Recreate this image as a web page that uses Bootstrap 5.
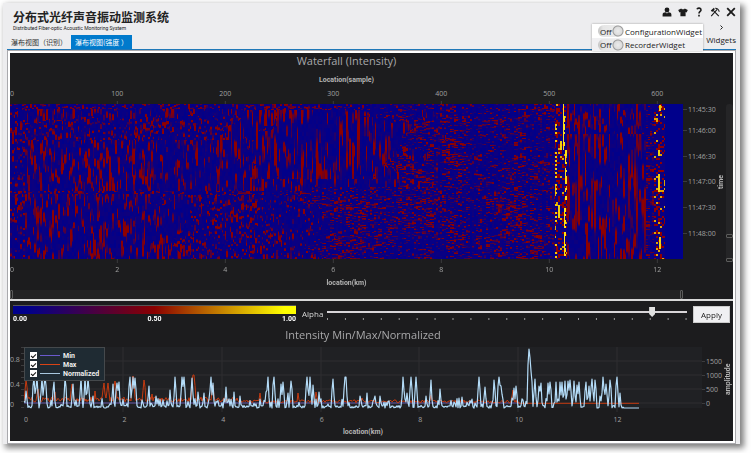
<!DOCTYPE html>
<html lang="zh-CN">
<head>
<meta charset="utf-8">
<meta name="viewport" content="width=device-width, initial-scale=1">
<title>分布式光纤声音振动监测系统</title>
<link href="https://cdn.jsdelivr.net/npm/bootstrap@5.3.0/dist/css/bootstrap.min.css" rel="stylesheet">
<style>
  body { background: #fff; font-family: "Open Sans", "Noto Sans CJK SC", sans-serif; font-size: 7px; line-height: 10px; color: #222; }
  .app-window { margin: 3px 11px 10px 3px; background: #ededef; box-shadow: 3px 3px 6px 1px rgba(0,0,0,.5); }
  .app-header { height: 47px; margin: 0 4px; border-bottom: 1px solid #1f78b8; }
  .app-title { font-family: "Noto Sans CJK SC", sans-serif; font-size: 12px; font-weight: 700; line-height: 16px; margin: 6px 0 0 6px; }
  .app-sub { font-family: Roboto, sans-serif; font-size: 5px; line-height: 6px; margin: 0 0 0 6px; }
  .view-tab { font-family: "Noto Sans CJK SC", sans-serif; font-size: 7px; line-height: 14px; padding: 0 4px; color: #333; text-decoration: none; }
  .view-tab.active { background: #007acc; color: #fff; }
  .icon-row { gap: 6px; }
  .tool-btn { border: 0; background: none; padding: 0; width: 10px; height: 10px; color: #1b1b1b; display: flex; }
  .widgets-btn { border: 0; background: none; padding: 0; font-size: 8px; line-height: 11px; color: #222; }
  .widget-menu { top: 21px; right: 37px; width: 111px; background: #f0f0f2; box-shadow: 0 0 2px rgba(0,0,0,.35); z-index: 3; }
  .widget-menu label { font-size: 8px; line-height: 13px; height: 13px; padding-left: 6px; gap: 1px; color: #222; }
  .widget-menu label:first-child { background: #fff; height: 14px; }
  .switch-box { display: grid; width: 26px; align-items: center; }
  .switch-box > * { grid-area: 1 / 1; }
  .switch-box input { appearance: none; margin: 0; width: 26px; height: 12px; border-radius: 6px; background: radial-gradient(circle at 20px 50%, #ececec 0, #dcdcdc 4px, #9a9a9a 5px, transparent 6px), linear-gradient(90deg, #c4c4c4, #e6e6e6 5px, #efefef); }
  .switch-box span { padding-left: 2px; z-index: 1; pointer-events: none; }
  .frame { margin: 0 4px; padding: 2px; background: #fff; border: 1px solid #a9a9ad; }
  .pane { background: #1c1c1e; color: #a6a6a6; }
  .pane svg { display: block; }
  .pane svg text { fill: #a0a0a0; font-size: 7px; }
  .plot-title { font-size: 11px; line-height: 16px; font-weight: 400; margin: 0; text-align: center; color: #a8a8aa; }
  .axis-title { font-family: Roboto, sans-serif; font-size: 7px; line-height: 10px; font-weight: 700; text-align: center; color: #b4b4b4; }
  .fall-grid { display: grid; grid-template-columns: minmax(0, 1fr) 50px; }
  .pt-title { height: 22px; }
  #heat { display: block; width: 100%; height: 155px; }
  .v-title { font-family: Roboto, sans-serif; writing-mode: vertical-rl; transform: rotate(180deg); font-weight: 700; font-size: 7px; line-height: 10px; text-align: center; color: #b4b4b4; }
  .v-strip { width: 7px; height: 158px; background: #252527; border-radius: 3px; margin-bottom: -3px; gap: 20px; }
  .grip { border: 1px solid #5c5c5c; border-radius: 1px; background: #222; }
  .v-strip .grip { height: 4px; }
  .h-strip { height: 9px; background: #232324; }
  .h-strip .grip { width: 3px; }
  .h-row { margin-top: 2px; }
  .split { height: 2px; background: #d8d8d8; }
  .control-row { padding: 4px 3px 0 3px; }
  .ramp { height: 9px; background: linear-gradient(90deg, #00008b 5%, #8b0000 50%, #ffff00 96%); border-top: 1px solid #555; }
  .ramp-box { flex: 0 0 283px; }
  .ramp-marks { font-family: Roboto, sans-serif; font-size: 7px; font-weight: 700; line-height: 11px; color: #fff; }
  .alpha-label { font-size: 8px; line-height: 12px; color: #d8d8d8; width: 31px; padding: 3px 0 0 6px; }
  .alpha-range { appearance: none; display: block; width: 100%; height: 10px; margin: 2px 0 0; background: linear-gradient(#d8d5d8, #d8d5d8) 0 4px / 100% 2px no-repeat; }
  .alpha-range::-webkit-slider-thumb { appearance: none; width: 6px; height: 10px; background: #e0e0e0; border: 0; clip-path: polygon(0 0, 100% 0, 100% 70%, 50% 100%, 0 70%); }
  .alpha-range::-moz-range-thumb { width: 6px; height: 10px; border: 0; border-radius: 0; background: #e0e0e0; }
  .apply-btn { width: 37px; height: 17px; margin: 1px 0 0 6px; padding: 0; font-size: 8px; line-height: 15px; background: #f0f0f2; border: 1px solid #ccc; border-radius: 0; color: #222; }
  .line-grid { display: grid; grid-template-columns: 14px minmax(0, 1fr) 31px; }
  .line-wrap { height: 65px; background: linear-gradient(#202124 61px, transparent 61px); }
  .plot-title-lower { margin-top: 2px; padding: 0 31px 0 14px; }
  .legend-box { top: 0; left: 0; width: 81px; background: #1f2b33; border: 1px solid #45494c; padding: 3px 0 2px 5px; }
  .legend-box label { font-family: Roboto, sans-serif; display: flex; align-items: center; height: 9px; font-size: 7px; font-weight: 700; color: #eee; }
  .legend-box input { appearance: none; width: 7px; height: 7px; margin: 0; background: #fff; display: grid; place-items: center; }
  .legend-box input:checked::after { content: ""; width: 5px; height: 3px; border-left: 1px solid #111; border-bottom: 1px solid #111; transform: rotate(-45deg); }
  .legend-box i { flex: none; width: 20px; height: 1px; margin: 0 3px 0 3px; }
  .key-min { background: #6a5acd; }
  .key-max { background: #d84315; }
  .key-norm { background: #a8c8e0; }
</style>
</head>
<body>
<div class="app-window position-relative">
  <header class="app-header d-flex justify-content-between">
    <div class="d-flex flex-column">
      <h1 class="app-title">分布式光纤声音振动监测系统</h1>
      <p class="app-sub">Distributed Fiber-optic Acoustic Monitoring System</p>
      <nav class="d-flex mt-auto">
        <a class="view-tab" href="#recognition">瀑布视图（识别）</a>
        <a class="view-tab active" href="#intensity" aria-current="page">瀑布视图(强度 ）</a>
      </nav>
    </div>
    <div class="d-flex flex-column align-items-end">
      <div class="icon-row d-flex mt-1">
        <button class="tool-btn" aria-label="User"><svg viewBox="0 0 10 10" width="10" height="10" fill="currentColor"><circle cx="5" cy="3" r="2.4"/><path d="M.6 9.4V7.6C.6 6 2 5.4 3.6 5.3L5 6.5 6.4 5.3C8 5.4 9.4 6 9.4 7.6V9.4Z"/></svg></button>
        <button class="tool-btn" aria-label="Theme"><svg viewBox="0 0 10 10" width="10" height="10" fill="currentColor"><path d="M3.2 1.4C4 2.6 6 2.6 6.8 1.4L9.8 3 8.6 5.4 7.6 4.9V9.2H2.4V4.9L1.4 5.4.2 3Z"/></svg></button>
        <button class="tool-btn" aria-label="Help"><svg viewBox="0 0 10 10" width="10" height="10" fill="none" stroke="currentColor" stroke-width="1.6"><path d="M3 2.2C3.6.6 7 .7 7 2.9 7 4.5 5 4.4 5 6.6M5 7.8V9.4"/></svg></button>
        <button class="tool-btn" aria-label="Settings"><svg viewBox="0 0 10 10" width="10" height="10" fill="none" stroke="currentColor"><path d="M1.2 9.2 7.2 2.4M8.8 9.2 3.2 3.4" stroke-width="1.1"/><path d="M5.2 1.2C7 1 9 2.6 9.2 4.8" stroke-width="1.1"/><path d="M.8 3.6 3.9.8 4.8 2.2 2.2 5Z" fill="currentColor" stroke="none"/></svg></button>
        <button class="tool-btn" aria-label="Close"><svg viewBox="0 0 10 10" width="10" height="10" fill="none" stroke="currentColor" stroke-width="1.8"><path d="M1.2 1.2 8.8 8.8M8.8 1.2 1.2 8.8"/></svg></button>
      </div>
      <button class="widgets-btn d-flex flex-column align-items-center mt-auto mb-1" aria-expanded="true">
        <svg class="mb-1" width="5" height="5" viewBox="0 0 5 5" fill="none" stroke="#222"><path d="M1.5.5 3.5 2.5 1.5 4.5"/></svg>Widgets</button>
    </div>
  </header>
  <div class="widget-menu position-absolute">
    <label class="d-flex align-items-center"><span class="switch-box"><input type="checkbox" role="switch"><span>Off</span></span>ConfigurationWidget</label>
    <label class="d-flex align-items-center"><span class="switch-box"><input type="checkbox" role="switch"><span>Off</span></span>RecorderWidget</label>
  </div>

  <main class="frame">
    <section class="pane">
      <div class="fall-grid">
        <div>
          <h2 class="plot-title pt-title">Waterfall (Intensity)</h2>
          <div class="axis-title">Location(sample)</div>
          <svg id="axisTop" width="100%" height="19"></svg>
        </div>
        <div></div>
        <canvas id="heat" width="673" height="155" role="img" aria-label="Waterfall intensity"></canvas>
        <div class="d-flex">
          <svg id="axisTime" width="33" height="155"></svg>
          <div class="v-title">time</div>
          <div class="v-strip ms-auto d-flex flex-column justify-content-end">
            <div class="grip"></div>
            <div class="grip"></div>
          </div>
        </div>
        <div>
          <svg id="axisKm" width="100%" height="19"></svg>
          <div class="axis-title">location(km)</div>
        </div>
        <div></div>
      </div>
      <div class="fall-grid h-row">
        <div class="h-strip d-flex justify-content-between">
          <div class="grip"></div><div class="grip"></div>
        </div>
      </div>
    </section>
    <div class="split"></div>
    <section class="pane">
      <div class="control-row d-flex">
        <div class="ramp-box">
          <div class="ramp"></div>
          <div class="ramp-marks d-flex justify-content-between"><span>0.00</span><span>0.50</span><span>1.00</span></div>
        </div>
        <label class="alpha-label" for="alpha">Alpha</label>
        <div class="flex-grow-1">
          <input class="alpha-range" id="alpha" type="range" min="0" max="100" value="91">
          <svg id="alphaTicks" width="100%" height="5"></svg>
        </div>
        <button class="btn apply-btn">Apply</button>
      </div>
      <h2 class="plot-title plot-title-lower">Intensity Min/Max/Normalized</h2>
      <div class="line-grid pt-1">
        <svg id="axisLeft" width="14" height="65"></svg>
        <div class="line-wrap position-relative">
          <svg id="lines" width="100%" height="65" viewBox="24 347 678 65" preserveAspectRatio="none"></svg>
          <div class="legend-box position-absolute">
            <label><input type="checkbox" checked><i class="key-min"></i>Min</label>
            <label><input type="checkbox" checked><i class="key-max"></i>Max</label>
            <label><input type="checkbox" checked><i class="key-norm"></i>Normalized</label>
          </div>
        </div>
        <div class="d-flex justify-content-between">
          <svg id="axisRight" width="21" height="65"></svg>
          <div class="v-title">amplitude</div>
        </div>
        <div></div>
        <div>
          <svg id="axisLine" width="100%" height="15"></svg>
          <div class="axis-title">location(km)</div>
        </div>
      </div>
      <div class="pb-1"></div>
    </section>
  </main>
</div>
<script src="https://cdn.jsdelivr.net/npm/bootstrap@5.3.0/dist/js/bootstrap.bundle.min.js"></script>
<script>
let seed = 20177;
const rnd = () => { seed = (seed * 1664525 + 1013904223) >>> 0; return seed / 4294967296; };
const $ = id => document.getElementById(id);
const label = (x, y, s, anchor = 'middle') => `<text x="${x}" y="${y}" text-anchor="${anchor}">${s}</text>`;
const vtick = (x, y1, y2) => `<line x1="${x}" x2="${x}" y1="${y1}" y2="${y2}" stroke="#3c3c3e"/>`;
const htick = (y, x1, x2) => `<line x1="${x1}" x2="${x2}" y1="${y}" y2="${y}" stroke="#3c3c3e"/>`;

// Horizontal axes of the waterfall: a label every 108 of 673 units.
let top1 = '', km = '';
for (let i = 0; i <= 6; i++) {
  const x = (i * 108 / 673 * 100 - 0.1) + '%';
  top1 += (i ? label(x, 11, i * 100) : label(0, 11, 0, 'start')) + vtick(x, 16, 19);
  km += (i ? label(x, 13, i * 2) : label(0, 13, 0, 'start')) + vtick(x, 0, 4);
}
$('axisTop').innerHTML = top1;
$('axisKm').innerHTML = km;
$('axisTime').innerHTML = [['11:45:30', 5], ['11:46:00', 26], ['11:46:30', 52], ['11:47:00', 77], ['11:47:30', 103], ['11:48:00', 129]]
  .map(([s, y]) => label(5, y + 3, s, 'start') + htick(y + .5, 0, 4)).join('');

// Waterfall: value noise whose cell shape depends on the region.
const W = 673, H = 155, c = $('heat').getContext('2d'), img = c.createImageData(W, H);
function hash(a, b, k) {
  let n = Math.imul(a + 311, 374761393) ^ Math.imul(b + 97, 668265263) ^ Math.imul(k + 7, 2147483647 - 5000);
  n = Math.imul(n ^ (n >>> 13), 1274126177); n ^= n >>> 16;
  n = Math.imul(n, 2246822507); n ^= n >>> 13;
  return (n >>> 0) / 4294967296;
}
function noise(x, y, k) {
  const a = Math.floor(x), b = Math.floor(y), u = x - a, v = y - b;
  const p = hash(a, b, k) * (1 - u) + hash(a + 1, b, k) * u, q = hash(a, b + 1, k) * (1 - u) + hash(a + 1, b + 1, k) * u;
  return p * (1 - v) + q * v;
}
function cells(x, y, w, h, k) {
  const col = Math.floor(x / w), off = hash(col, 1, k) * h, r = (y + off) / h, b = Math.floor(r);
  const t = Math.min(1, Math.max(0, (r - b - .5) * 2 + .5));
  return hash(col, b, k + 1) * (1 - t) + hash(col, b + 1, k + 1) * t;
}
for (let y = 0; y < H; y++) for (let x = 0; x < W; x++) {
  const j = (noise(x / 14, y / 12, 3) - .5) * 90, big = noise(x / 22, y / 20, 9) - .5;
  let v, th = .79 - big * .26;
  if (x >= 557 && x < 636) { v = cells(x, y, 1.6, y < 30 ? 8 : 17, 20); th -= .04; }
  else if (y < 5 || Math.abs(y - 88) < 2) v = cells(x, y, 2, 2, 30);
  else if (x + j > 400 || (x + j > 310 && y > 82)) { v = cells(x, y, 4, 1, 40) * .55 + cells(x, y, 2, 2, 44) * .45; th -= .07; }
  else if (x + j > 230 && x + j < 390 && y > 5 && y < 75) { v = cells(x, y, 1.5, 15, 50); th -= .02; }
  else if ((y > 14 + j / 6 && y < 36) || x < 15 || (y > 90 && x + j > 165)) v = cells(x, y, 1.6, 3, 60);
  else v = cells(x, y, 1.5, 9, 70);
  let t = Math.min(1, Math.max(0, (v - th + .16) / .26));
  if (t < .05) t = hash(x >> 1, y >> 2, 80) * .1;
  let r = 142 * t, g = 0, b = 139 * (1 - t);
  const hotA = x >= 545 && x < 557, hotB = x >= 644 && x < 655;
  if (hotA || hotB) {
    const h = hash(x >> 1, y >> 1, 91);
    if (h > .93) { r = 225; g = 165; b = 0; } else if (h > .7) { r = 145; b = 0; } else { r = 10; b = 130; }
  }
  const line = 553 + (y > 45 && y < 100 ? 2 : y >= 100 ? 1 : 0);
  if ((x === line || (x === line + 1 && hash(4, y >> 1, 97) > .5)) && hash(1, y >> 2, 95) > .25) { r = 255; g = 225; b = 20; }
  if (x >= 545 && x < 547 && y > 18 && y % 4 < 2 && hash(2, y >> 2, 96) > .3) { r = 245; g = 200; b = 0; }
  if (x >= 655) { r = 0; g = 0; b = 139; }
  const o = (y * W + x) * 4;
  img.data[o] = r; img.data[o + 1] = g; img.data[o + 2] = b; img.data[o + 3] = 255;
}
c.putImageData(img, 0, 0);
for (const [x, y, w, h] of [[550, 37, 2, 9], [548, 101, 2, 13], [648, 70, 2, 18], [649, 133, 2, 12], [649, 1, 2, 6], [648, 46, 2, 6]]) {
  c.fillStyle = '#f0d010'; c.fillRect(x, y, w, h);
}

let ticks = '';
for (let i = 0; i <= 20; i++) ticks += `<rect x="${i * 4.98}%" y="1" width="1" height="2" fill="#999"/>`;
$('alphaTicks').innerHTML = ticks;

// Line chart, in the units of its viewBox.
const normPeaks = [[26,391],[34,378],[37,377],[42,378],[45,377],[54,382],[65,378],[73,384],[81,378],[85,377],[88,378],[93,396],[113,384],[117,383],[119,382],[130,377],[133,377],[135,378],[149,386],[156,396],[170,390],[175,377],[182,377],[184,377],[192,378],[198,392],[204,393],[211,377],[213,383],[226,387],[234,392],[240,396],[266,392],[268,377],[274,377],[281,384],[283,382],[288,393],[291,381],[307,377],[310,377],[313,385],[319,392],[333,379],[345,377],[346,377],[360,396],[367,393],[375,396],[380,396],[403,377],[407,393],[411,377],[416,377],[426,396],[431,380],[440,389],[454,402],[462,397],[479,377],[485,387],[494,380],[499,377],[501,386],[514,388],[516,386],[522,400],[529,349],[531,371],[535,379],[539,386],[541,383],[548,383],[550,382],[556,382],[560,382],[562,382],[565,381],[568,381],[570,380],[574,381],[577,385],[579,382],[586,382],[589,386],[592,379],[595,380],[600,396],[603,377],[606,384],[610,380],[617,377],[620,393]];
const maxPeaks = [[26,380],[38,389],[55,392],[72,384],[95,391],[104,383],[108,383],[115,381],[133,376],[144,380],[152,394],[193,375],[194,375],[213,385],[260,393],[298,393],[316,392],[362,398],[431,395],[462,399],[513,390]];
function trace(end, base, peaks, spread) {
  const ys = [];
  for (let x = 24; x <= end; x++) ys[x] = base(x);
  for (const [px, py] of peaks) for (let d = -1; d <= 1; d++) {
    const x = px + d;
    if (ys[x] !== undefined) ys[x] = Math.min(ys[x], d ? py + spread * (.5 + rnd()) : py);
  }
  let s = '';
  for (let x = 24; x <= end; x++) s += (s ? 'L' : 'M') + x + ' ' + Math.min(408, ys[x]).toFixed(1);
  return s;
}
const norm = trace(639, x => x > 623 ? 408 : rnd() < (x < 330 ? .3 : .16) ? 398 + rnd() * 8 : 405.5 + rnd() * 2.5, normPeaks, 14);
const max = trace(639, x => x > 518 ? 403.3 : x < 240 ? 397 + rnd() * 5 : 400 + rnd() * 3, maxPeaks, 8);
const grid = [361, 375, 389, 403].map(y => `M24 ${y}H702`).join('') + [123, 222, 321, 419, 518, 617].map(x => `M${x} 347V412`).join('');
const stroke = (d, col, w, o = 1) => `<path d="${d}" fill="none" stroke="${col}" stroke-width="${w}" opacity="${o}" stroke-linejoin="round" vector-effect="non-scaling-stroke"/>`;
$('lines').innerHTML = stroke(grid, '#2e2f31', 1) + stroke('M24 403H520', '#7462c8', 1, .8) + stroke(max, '#c43a10', 1) + stroke(norm, '#b4dcf8', 1.2);
$('axisLeft').innerHTML = label(0, 15, '0.8', 'start') + label(0, 40, '0.4', 'start') + label(0, 60, '0', 'start') + [0, 6, 12, 18, 24, 30, 36, 42, 48, 54, 60].map(y => htick(y + .5, 11, 14)).join('');
$('axisRight').innerHTML = [[1500, 14], [1000, 28], [500, 42], [0, 56]].map(([s, y]) => htick(y + .5, 0, 3) + label(4, y + 3, s, 'start')).join('');
$('axisLine').innerHTML = [0, 2, 4, 6, 8, 10, 12].map(v => label((.3 + v * 7.27) + '%', 10, v)).join('');
</script>
</body>
</html>
